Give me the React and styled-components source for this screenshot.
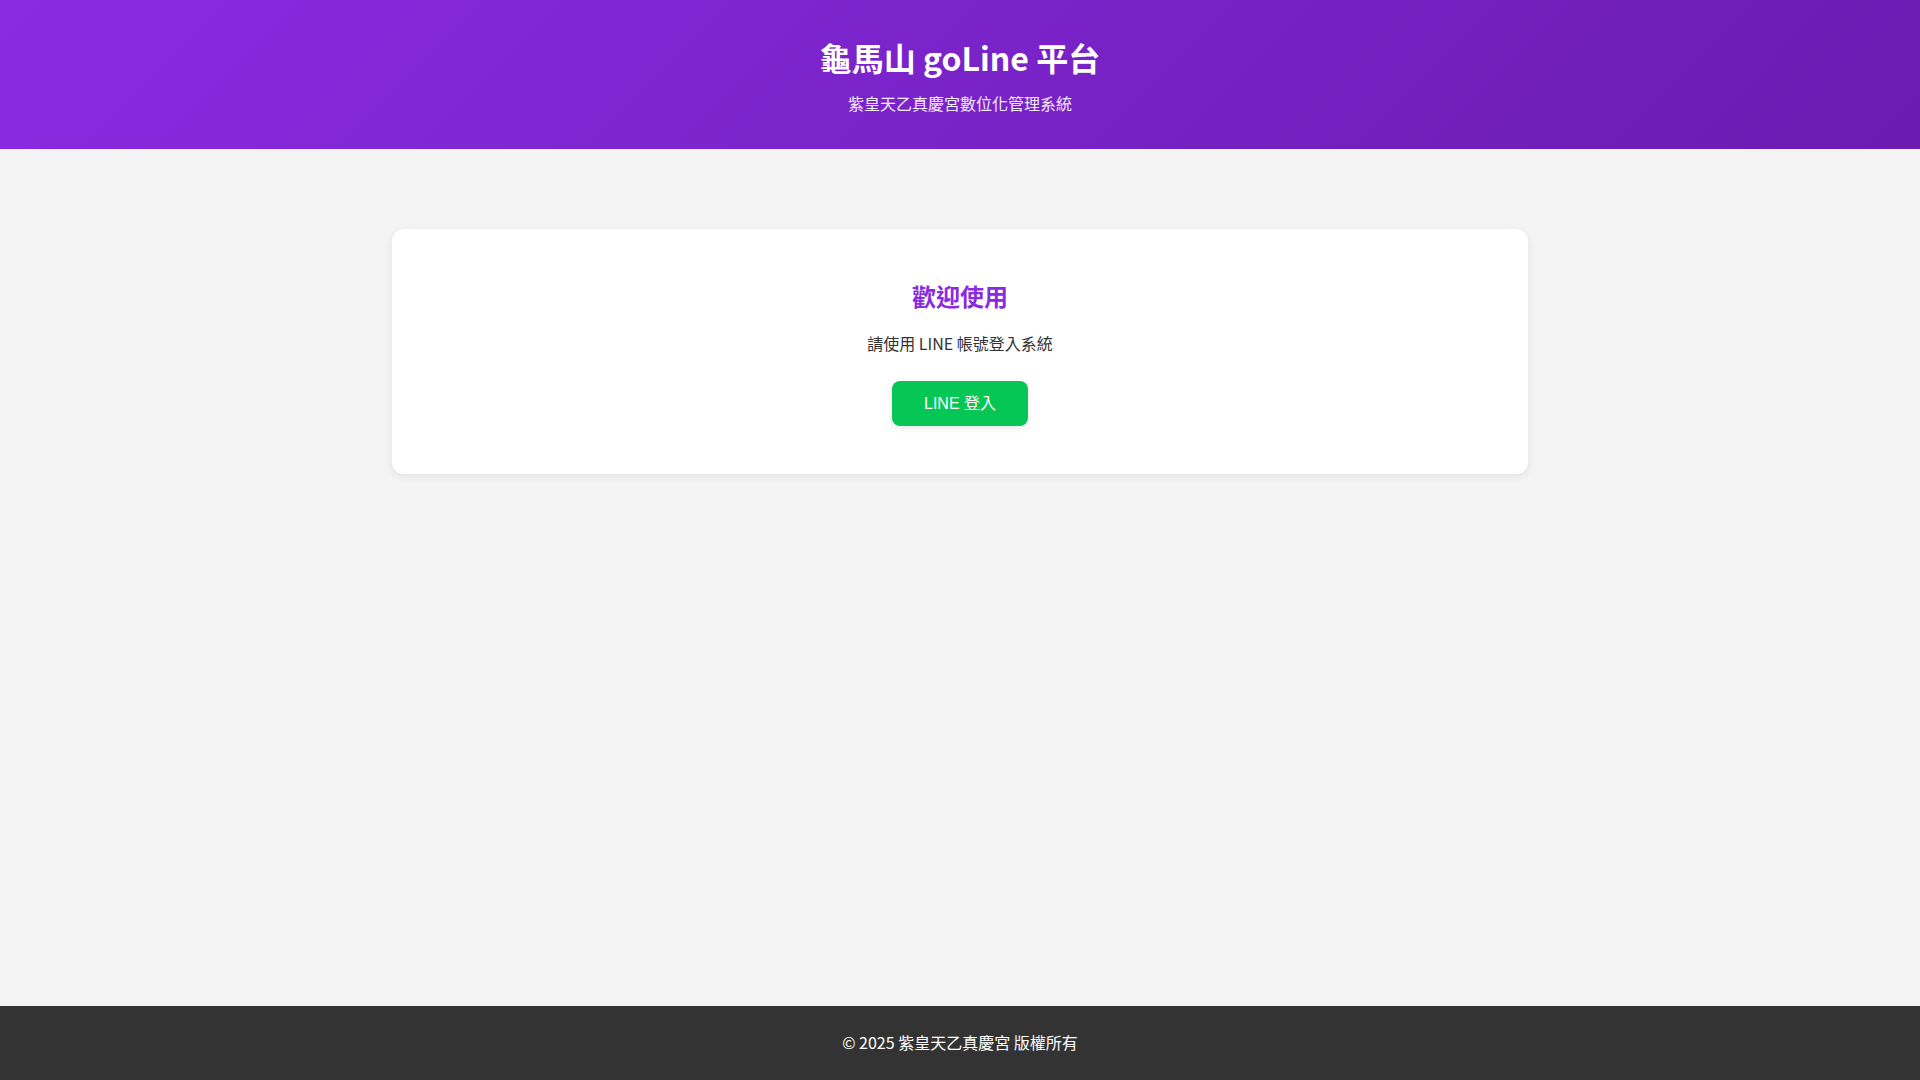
import React from "react";
import styled, { createGlobalStyle } from "styled-components";

const GlobalStyle = createGlobalStyle`
    * {
        box-sizing: border-box;
    }

    html, body {
        margin: 0;
        padding: 0;
    }

    body {
        font-family: "Noto Sans CJK TC", "Noto Sans", sans-serif;
        background: #f4f4f4;
        color: #333;
        line-height: 1.6;
    }
`;

const Page = styled.div`
    min-height: 100vh;
    display: flex;
    flex-direction: column;
`;

const Header = styled.header`
    background: linear-gradient(135deg, #8a2be2 0%, #6a1bb0 100%);
    color: #fff;
    text-align: center;
    padding: 32px 16px;
`;

const Title = styled.h1`
    margin: 0 0 8px;
    font-size: 32px;
    font-weight: 700;
    line-height: 1.6;
`;

const Tagline = styled.p`
    margin: 0;
    font-size: 16px;
    opacity: 0.9;
`;

const Main = styled.main`
    flex: 1;
    width: 100%;
    max-width: 1200px;
    margin: 0 auto;
    padding: 80px 32px;
`;

const Card = styled.section`
    background: #fff;
    border-radius: 12px;
    box-shadow: 0 2px 10px rgba(0, 0, 0, 0.08);
    padding: 48px 32px;
    text-align: center;
`;

const CardTitle = styled.h2`
    margin: 0 0 16px;
    font-size: 24px;
    font-weight: 700;
    color: #8a2be2;
    line-height: 1.6;
`;

const CardText = styled.p`
    margin: 0 0 24px;
    font-size: 16px;
    color: #333;
`;

const LineButton = styled.button`
    display: inline-block;
    border: none;
    border-radius: 8px;
    background: #06c755;
    color: #fff;
    font-family: "Liberation Sans", Arial, "Noto Sans CJK TC", sans-serif;
    font-size: 16px;
    line-height: 21px;
    padding: 12px 32px;
    cursor: pointer;
    box-shadow: 0 2px 6px rgba(0, 0, 0, 0.1);

    &:hover {
        background: #05b34c;
    }
`;

const Footer = styled.footer`
    background: #333;
    color: #fff;
    text-align: center;
    padding: 24px 16px;
    font-size: 16px;
`;

export default function App() {
    return (
        <Page>
            <GlobalStyle />
            <Header>
                <Title>龜馬山 goLine 平台</Title>
                <Tagline>紫皇天乙真慶宮數位化管理系統</Tagline>
            </Header>
            <Main>
                <Card>
                    <CardTitle>歡迎使用</CardTitle>
                    <CardText>請使用 LINE 帳號登入系統</CardText>
                    <LineButton type="button">LINE 登入</LineButton>
                </Card>
            </Main>
            <Footer>© 2025 紫皇天乙真慶宮 版權所有</Footer>
        </Page>
    );
}
